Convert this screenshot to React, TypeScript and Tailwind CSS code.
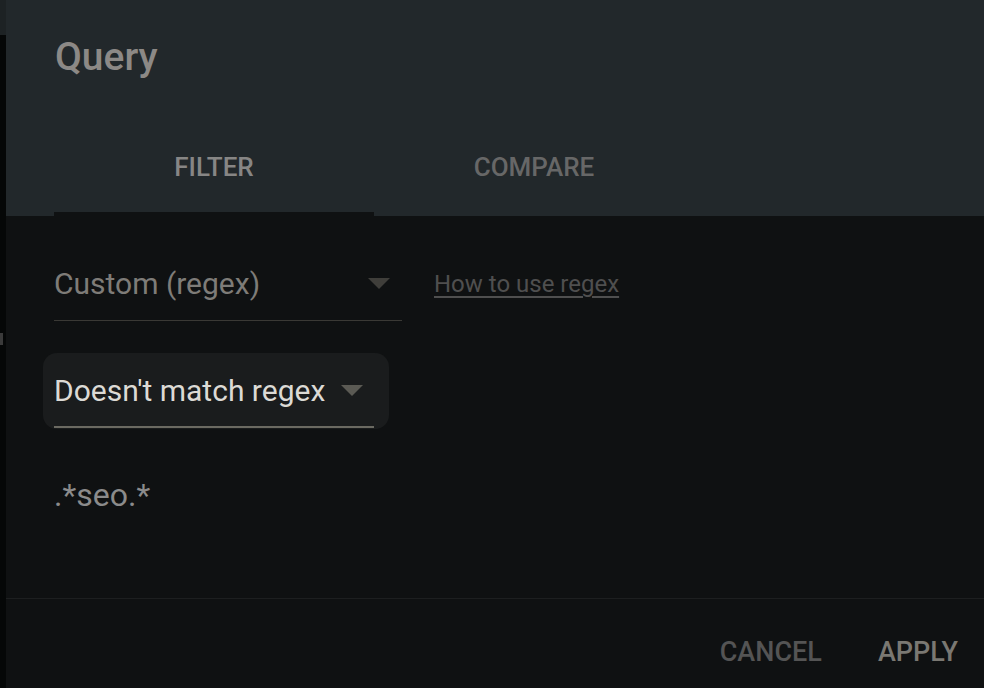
import React from 'react';

const Caret = ({ color }: { color: string }) => (
    <svg width="22" height="12" viewBox="0 0 22 12" className="shrink-0">
        <path d="M0 0 L22 0 L11 11 Z" fill={color} />
    </svg>
);

const App = () => {
    return (
        <div className="flex w-[984px] h-[688px] overflow-hidden bg-[#0f1112] font-['Roboto',sans-serif]">
            {/* strip of the page behind the dialog */}
            <div className="w-[6px] shrink-0 flex flex-col bg-[#050707]">
                <div className="h-[35px] bg-[#1d2224]" />
                <div className="h-[298px]" />
                <div className="h-[12px] w-[3px] bg-[#3a3a3a]" />
            </div>

            <div className="flex-1 flex flex-col">
                {/* header */}
                <div className="bg-[#22282b] h-[216px] flex flex-col">
                    <div className="h-[114px] flex items-center px-[49px]">
                        <h1 className="text-[39px] font-medium text-[#8c8986] leading-none">Query</h1>
                    </div>
                    <div className="flex-1 flex px-[48px]">
                        <div className="w-[320px] flex flex-col">
                            <div className="flex-1 flex items-center justify-center pt-[9px] text-[26px] font-medium text-[#878685]">FILTER</div>
                            <div className="h-[4px] bg-[#0f1112]" />
                        </div>
                        <div className="w-[320px] flex flex-col">
                            <div className="flex-1 flex items-center justify-center pt-[9px] text-[26px] font-medium text-[#676767]">COMPARE</div>
                            <div className="h-[4px]" />
                        </div>
                    </div>
                </div>

                {/* body */}
                <div className="flex-1 flex flex-col px-[48px] pt-[32px]">
                    <div className="flex items-center gap-[32px]">
                        <div className="w-[348px] h-[73px] flex items-center justify-between border-b border-[#3a3935] pr-[12px]">
                            <span className="text-[30px] text-[#7e7c78] -mt-[2px]">Custom (regex)</span>
                            <Caret color="#3f3e3a" />
                        </div>
                        <a className="text-[24px] text-[#4f4f4f] underline underline-offset-[4px] pb-[1px]">How to use regex</a>
                    </div>

                    <div className="mt-[32px] -ml-[11px] w-[346px] h-[76px] rounded-[14px] bg-[#1a1c1d] flex flex-col pl-[11px]">
                        <div className="flex-1 flex items-center gap-[16px] pt-[2px]">
                            <span className="text-[30px] text-[#dcdad5]">Doesn't match regex</span>
                            <Caret color="#5b5a54" />
                        </div>
                        <div className="w-[320px] h-[2px] bg-[#6b6a62] mb-[1px]" />
                    </div>

                    <div className="mt-[50px] text-[32px] text-[#8b8b8b] leading-none">.*seo.*</div>
                </div>

                {/* footer */}
                <div className="h-[90px] border-t border-[#1d1f20] flex items-center justify-end gap-[56px] pr-[26px] pt-[18px]">
                    <button className="text-[27px] font-medium text-[#545454]">CANCEL</button>
                    <button className="text-[27px] font-medium text-[#7a7872]">APPLY</button>
                </div>
            </div>
        </div>
    );
};

export default App;
